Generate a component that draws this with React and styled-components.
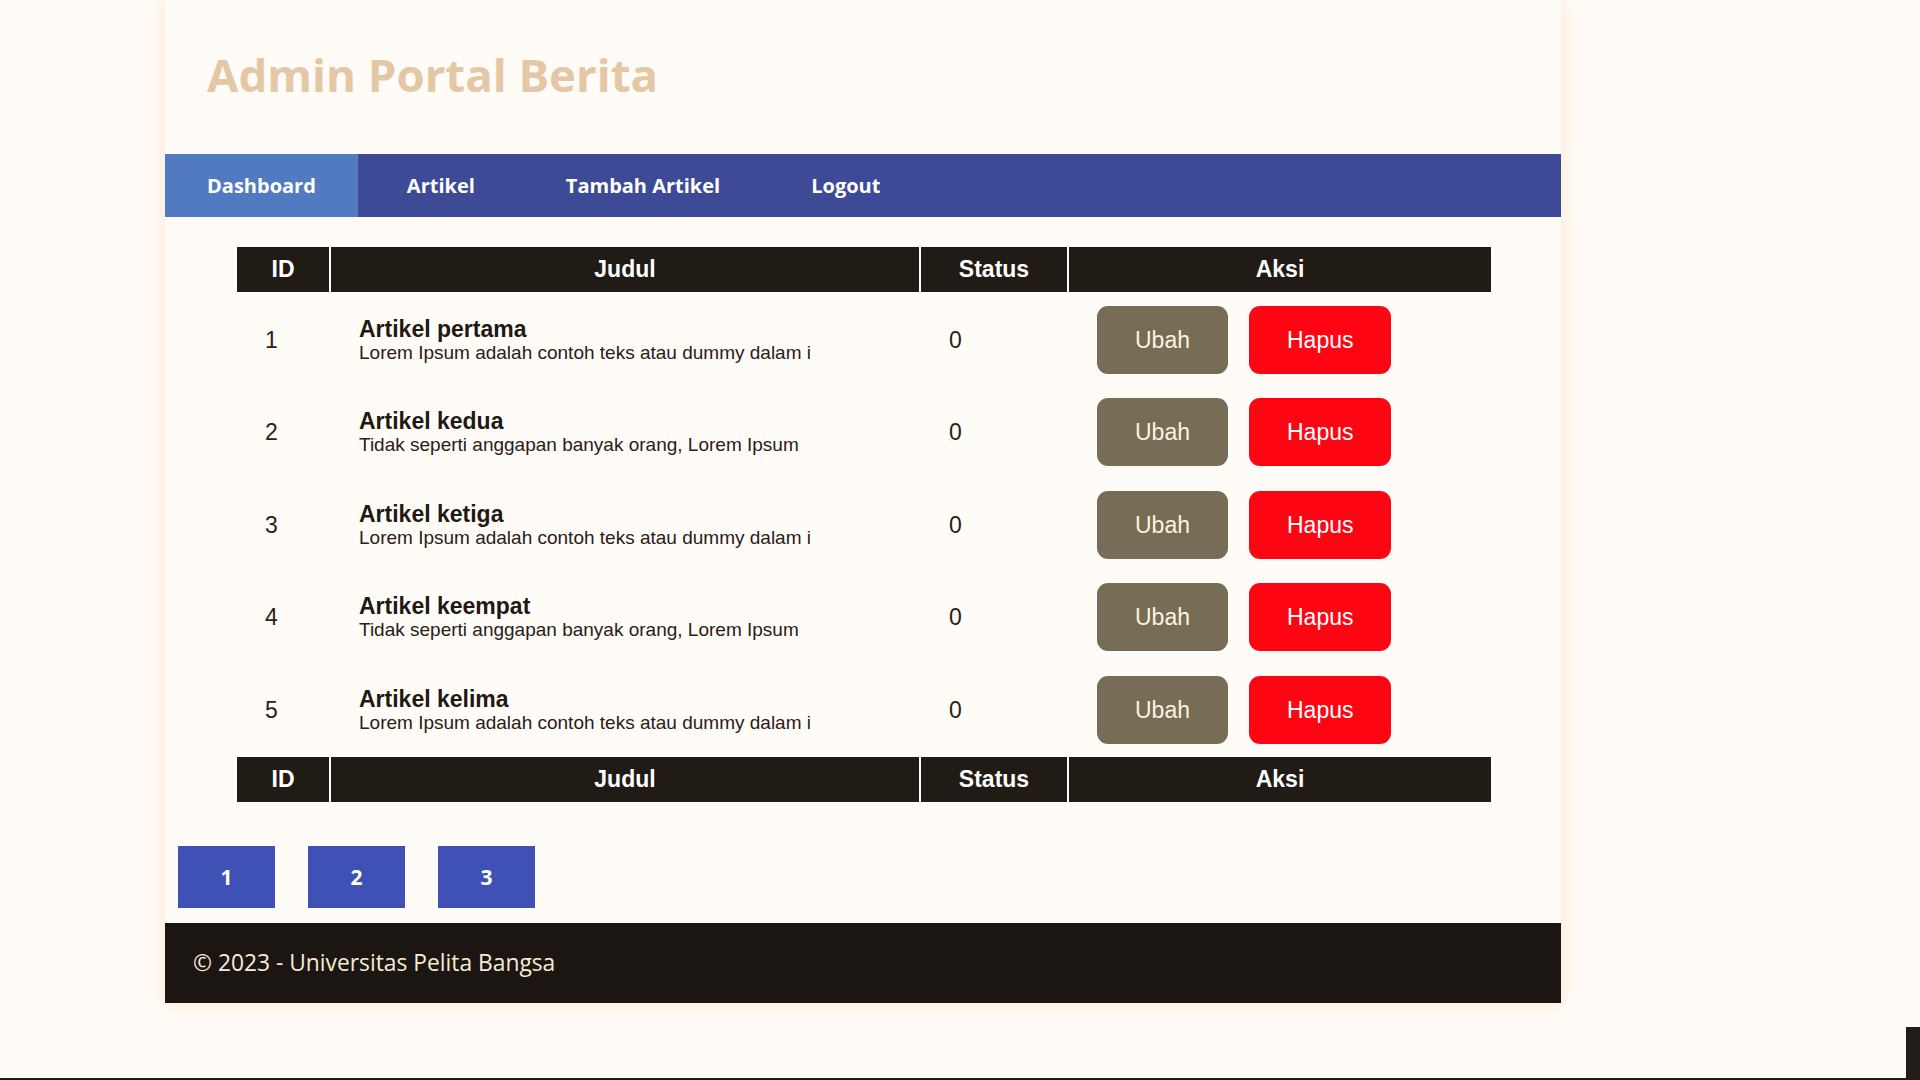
import { createGlobalStyle } from "styled-components";
import styled from "styled-components";

const GlobalStyle = createGlobalStyle`
  html, body {
    margin: 0;
    padding: 0;
    background: #fffbf7;
  }
  body {
    font-family: "Liberation Sans", Arial, sans-serif;
    height: 1080px;
    overflow: hidden;
  }
`;

const Page = styled.div`
  width: 1396px;
  margin-left: 165px;
  background: #fffbf7;
  box-shadow: 0 0 16px rgba(252, 214, 170, 0.55);
`;

const Header = styled.header`
  padding: 42px 42px 47px;

  & > h1 {
    margin: 0;
    font-family: "Open Sans", sans-serif;
    font-weight: 700;
    font-size: 45.6px;
    line-height: 65px;
    color: #e4c8a6;
  }
`;

const Nav = styled.nav`
  display: flex;
  gap: 7px;
  height: 63px;
  background: #3d4b97;
`;

const NavLink = styled.a`
  display: block;
  padding: 0 42px;
  line-height: 63px;
  font-family: "Open Sans", sans-serif;
  font-weight: 700;
  font-size: 20px;
  color: #ffffff;
  text-decoration: none;
  background: ${(p) => (p.$active ? "#527ac1" : "transparent")};
`;

const Main = styled.main`
  padding-top: 28px;
`;

const Table = styled.table`
  width: 1258px;
  margin-left: 70px;
  table-layout: fixed;
  border-collapse: separate;
  border-spacing: 2px;

  & th {
    background: #211b15;
    color: #ffffff;
    font-size: 23px;
    font-weight: 700;
    line-height: 27px;
    padding: 9px 10px;
    text-align: center;
  }

  & td {
    padding: 11.5px 28px 11px;
    font-size: 23px;
    line-height: 26px;
    color: #2a2118;
    vertical-align: middle;
  }
`;

const Col = styled.col`
  width: ${(p) => (p.$w ? `${p.$w}px` : "auto")};
`;

const Title = styled.div`
  font-weight: 700;
  font-size: 23px;
  line-height: 26px;
  color: #1e1913;
`;

const Desc = styled.div`
  font-size: 19px;
  line-height: 22px;
  color: #2a2018;
`;

const Actions = styled.div`
  display: flex;
  gap: 21px;
`;

const ActionButton = styled.a`
  display: block;
  padding: 21px 38px;
  border-radius: 11px;
  font-size: 23px;
  line-height: 26px;
  text-decoration: none;
  color: ${(p) => (p.$danger ? "#ffffff" : "#fbf3de")};
  background: ${(p) => (p.$danger ? "#ff0514" : "#776c55")};
`;

const Pagination = styled.div`
  display: flex;
  gap: 33px;
  padding: 42px 0 15px 13px;
`;

const PageLink = styled.a`
  width: 97px;
  height: 62px;
  display: flex;
  align-items: center;
  justify-content: center;
  background: #3f51b5;
  color: #ffffff;
  font-family: "Open Sans", sans-serif;
  font-weight: 700;
  font-size: 21px;
  text-decoration: none;
`;

const Footer = styled.footer`
  height: 80px;
  display: flex;
  align-items: center;
  padding-left: 28px;
  background: #1b1612;
  color: #f6ebd6;
  font-family: "Open Sans", sans-serif;
  font-size: 22.8px;
`;

const ScreenEdge = styled.div`
  position: fixed;
  left: 0;
  right: 0;
  bottom: 0;
  height: 2px;
  background: #1e1a16;
`;

const ScrollStub = styled.div`
  position: fixed;
  right: 0;
  bottom: 0;
  width: 14px;
  height: 53px;
  background: #221d17;
`;

const articles = [
  { id: 1, title: "Artikel pertama", desc: "Lorem Ipsum adalah contoh teks atau dummy dalam i" },
  { id: 2, title: "Artikel kedua", desc: "Tidak seperti anggapan banyak orang, Lorem Ipsum" },
  { id: 3, title: "Artikel ketiga", desc: "Lorem Ipsum adalah contoh teks atau dummy dalam i" },
  { id: 4, title: "Artikel keempat", desc: "Tidak seperti anggapan banyak orang, Lorem Ipsum" },
  { id: 5, title: "Artikel kelima", desc: "Lorem Ipsum adalah contoh teks atau dummy dalam i" },
];

const HeadRow = () => (
  <tr>
    <th>ID</th>
    <th>Judul</th>
    <th>Status</th>
    <th>Aksi</th>
  </tr>
);

export default function App() {
  return (
    <>
      <GlobalStyle />
      <Page>
        <Header>
          <h1>Admin Portal Berita</h1>
        </Header>
        <Nav>
          <NavLink href="#" $active>Dashboard</NavLink>
          <NavLink href="#">Artikel</NavLink>
          <NavLink href="#">Tambah Artikel</NavLink>
          <NavLink href="#">Logout</NavLink>
        </Nav>
        <Main>
          <Table>
            <colgroup>
              <Col $w={92} />
              <Col $w={588} />
              <Col $w={146} />
              <Col />
            </colgroup>
            <thead>
              <HeadRow />
            </thead>
            <tbody>
              {articles.map((a) => (
                <tr key={a.id}>
                  <td>{a.id}</td>
                  <td>
                    <Title>{a.title}</Title>
                    <Desc>{a.desc}</Desc>
                  </td>
                  <td>0</td>
                  <td>
                    <Actions>
                      <ActionButton href="#">Ubah</ActionButton>
                      <ActionButton href="#" $danger>Hapus</ActionButton>
                    </Actions>
                  </td>
                </tr>
              ))}
            </tbody>
            <tfoot>
              <HeadRow />
            </tfoot>
          </Table>
          <Pagination>
            <PageLink href="#">1</PageLink>
            <PageLink href="#">2</PageLink>
            <PageLink href="#">3</PageLink>
          </Pagination>
        </Main>
        <Footer>© 2023 - Universitas Pelita Bangsa</Footer>
      </Page>
      <ScreenEdge />
      <ScrollStub />
    </>
  );
}
